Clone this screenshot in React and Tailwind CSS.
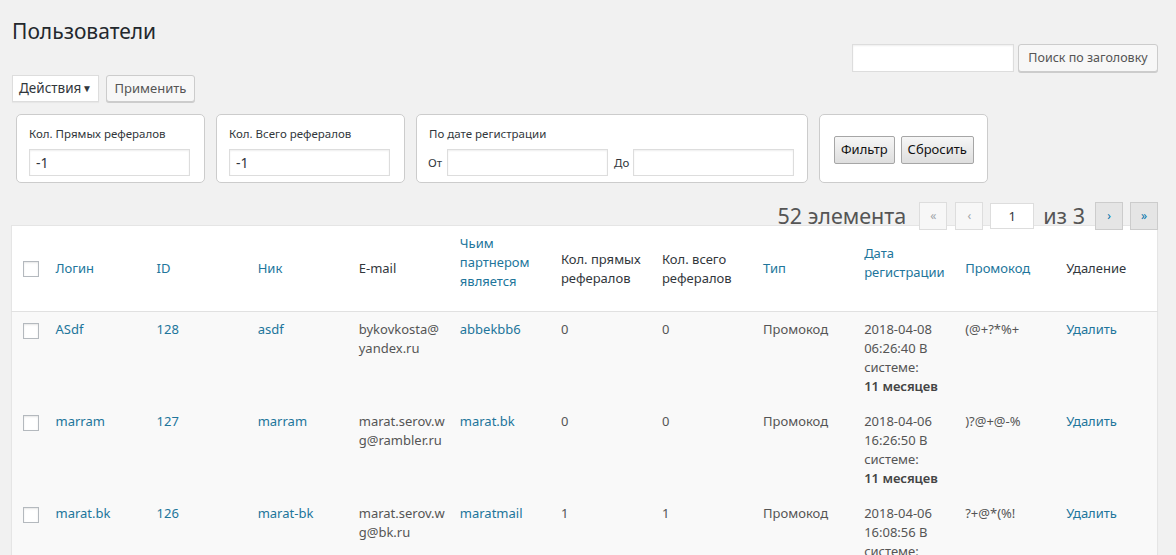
import React from 'react';

const rows = [
  {
    login: 'ASdf',
    id: '128',
    nick: 'asdf',
    email: ['bykovkosta@', 'yandex.ru'],
    partner: 'abbekbb6',
    direct: '0',
    total: '0',
    type: 'Промокод',
    date: ['2018-04-08', '06:26:40 В', 'системе:'],
    age: '11 месяцев',
    promo: '(@+?*%+',
  },
  {
    login: 'marram',
    id: '127',
    nick: 'marram',
    email: ['marat.serov.w', 'g@rambler.ru'],
    partner: 'marat.bk',
    direct: '0',
    total: '0',
    type: 'Промокод',
    date: ['2018-04-06', '16:26:50 В', 'системе:'],
    age: '11 месяцев',
    promo: ')?@+@-%',
  },
  {
    login: 'marat.bk',
    id: '126',
    nick: 'marat-bk',
    email: ['marat.serov.w', 'g@bk.ru'],
    partner: 'maratmail',
    direct: '1',
    total: '1',
    type: 'Промокод',
    date: ['2018-04-06', '16:08:56 В', 'системе:'],
    age: '11 месяцев',
    promo: '?+@*(%!',
  },
];

const Checkbox = () => (
  <span className="block w-[16px] h-[16px] border border-[#b4b9be] bg-white shadow-[inset_0_1px_2px_rgba(0,0,0,0.1)]" />
);

const FilterInput = ({ value }) => (
  <input
    readOnly
    value={value}
    className="w-[161px] h-[27px] border border-[#ddd] bg-white px-[6px] text-[14px] text-[#32373c] shadow-[inset_0_1px_2px_rgba(0,0,0,0.07)] outline-none"
  />
);

const OldButton = ({ children }) => (
  <button className="h-[28px] px-[6px] border border-[#a6a6a6] rounded-[2px] bg-gradient-to-b from-[#f6f6f6] to-[#dedede] text-[13px] text-[#111]">
    {children}
  </button>
);

const PageBtn = ({ children, active }) => (
  <span
    className={
      active
        ? 'flex items-center justify-center w-[28px] h-[28px] border border-[#ccc] bg-[#e5e5e5] text-[12px] text-[#0073aa]'
        : 'flex items-center justify-center w-[28px] h-[28px] border border-[#ddd] bg-[#f7f7f7] text-[12px] text-[#a0a5aa]'
    }
  >
    {children}
  </span>
);

export default function App() {
  const link = 'text-[#21759b]';
  return (
    <div className="min-h-screen bg-[#f1f1f1] pl-[11px] pr-[18px] font-['Noto_Sans','Open_Sans',sans-serif] text-[13px] text-[#555]">
      <h1 className="pt-[17px] pl-[1px] text-[21px] leading-[29px] text-[#23282d]">Пользователи</h1>

      {/* search */}
      <div className="flex justify-end -mt-[2px]">
        <input readOnly className="w-[162px] h-[28px] border border-[#ddd] bg-white shadow-[inset_0_1px_2px_rgba(0,0,0,0.07)] outline-none" />
        <button className="ml-[4px] h-[28px] w-[140px] border border-[#ccc] rounded-[3px] bg-[#f7f7f7] shadow-[0_1px_0_#ccc] text-[12.5px] text-[#555]">
          Поиск по заголовку
        </button>
      </div>

      {/* bulk actions */}
      <div className="mt-[3px] ml-[1px] flex gap-[7px]">
        <div className="flex items-center justify-between w-[87px] h-[27px] border border-[#ddd] bg-white pl-[6px] pr-[6px] text-[13.5px] text-[#32373c] shadow-[0_1px_1px_rgba(0,0,0,0.04)]">
          <span>Действия</span>
          <span className="text-[10px]">▼</span>
        </div>
        <button className="w-[89px] h-[27px] border border-[#ccc] rounded-[3px] bg-[#f7f7f7] shadow-[0_1px_0_#ccc] text-[13px] text-[#555]">
          Применить
        </button>
      </div>

      {/* filters */}
      <div className="mt-[12px] ml-[5px] flex gap-[11px] text-[11.5px] text-[#32373c]">
        <div className="w-[189px] h-[69px] border border-[#ccc] rounded-[5px] bg-white pl-[12px] pt-[11px]">
          <div className="leading-[16px]">Кол. Прямых рефералов</div>
          <div className="mt-[7px]"><FilterInput value="-1" /></div>
        </div>
        <div className="w-[189px] h-[69px] border border-[#ccc] rounded-[5px] bg-white pl-[12px] pt-[11px]">
          <div className="leading-[16px]">Кол. Всего рефералов</div>
          <div className="mt-[7px]"><FilterInput value="-1" /></div>
        </div>
        <div className="w-[392px] h-[69px] border border-[#ccc] rounded-[5px] bg-white pl-[11px] pt-[11px]">
          <div className="leading-[16px] pl-[1px]">По дате регистрации</div>
          <div className="mt-[7px] flex items-center">
            <span className="w-[19px]">От</span>
            <FilterInput value="" />
            <span className="ml-[6px] w-[19px]">До</span>
            <FilterInput value="" />
          </div>
        </div>
        <div className="w-[169px] h-[69px] border border-[#ccc] rounded-[5px] bg-white pl-[14px] pt-[21px] flex gap-[6px] items-start">
          <OldButton>Фильтр</OldButton>
          <OldButton>Сбросить</OldButton>
        </div>
      </div>

      {/* pagination */}
      <div className="relative z-10 mt-[19px] flex justify-end items-center h-[28px] text-[#555]">
        <span className="text-[21.5px] mr-[13px]">52 элемента</span>
        <PageBtn>«</PageBtn>
        <span className="ml-[8px]"><PageBtn>‹</PageBtn></span>
        <input readOnly value="1" className="ml-[7px] w-[44px] h-[26px] border border-[#ddd] bg-white text-center text-[13px] text-[#32373c] outline-none" />
        <span className="ml-[9px] mr-[10px] text-[21.5px]">из 3</span>
        <PageBtn active>›</PageBtn>
        <span className="ml-[7px]"><PageBtn active>»</PageBtn></span>
      </div>

      {/* table */}
      <table className="-mt-[5px] w-[1147px] table-fixed border border-[#e5e5e5] shadow-[0_1px_1px_rgba(0,0,0,0.04)] border-collapse">
        <colgroup>
          <col className="w-[34px]" />
        </colgroup>
        <thead className="bg-white text-[13px] leading-[19px]">
          <tr className="border-b border-[#e1e1e1] h-[85px]">
            <th className="align-middle pl-[11px]"><Checkbox /></th>
            <th className={`text-left font-normal align-middle px-[10px] ${link}`}>Логин</th>
            <th className={`text-left font-normal align-middle px-[10px] ${link}`}>ID</th>
            <th className={`text-left font-normal align-middle px-[10px] ${link}`}>Ник</th>
            <th className="text-left font-normal align-middle px-[10px] text-[#32373c]">E-mail</th>
            <th className={`text-left font-normal align-middle px-[10px] pt-[8px] pb-[20px] ${link}`}>Чьим партнером является</th>
            <th className="text-left font-normal align-middle px-[10px] text-[#32373c]">Кол. прямых рефералов</th>
            <th className="text-left font-normal align-middle px-[10px] text-[#32373c]">Кол. всего рефералов</th>
            <th className={`text-left font-normal align-middle px-[10px] ${link}`}>Тип</th>
            <th className={`text-left font-normal align-middle px-[10px] pt-[8px] pb-[20px] ${link}`}>Дата регистрации</th>
            <th className={`text-left font-normal align-middle px-[10px] ${link}`}>Промокод</th>
            <th className="text-left font-normal align-middle px-[10px] text-[#32373c]">Удаление</th>
          </tr>
        </thead>
        <tbody className="bg-[#f9f9f9] text-[13px] leading-[19px]">
          {rows.map((r) => (
            <tr key={r.id} className="h-[92px]">
              <td className="align-top pl-[11px] pt-[11px]"><Checkbox /></td>
              <td className={`align-top px-[10px] pt-[8px] ${link}`}>{r.login}</td>
              <td className={`align-top px-[10px] pt-[8px] ${link}`}>{r.id}</td>
              <td className={`align-top px-[10px] pt-[8px] ${link}`}>{r.nick}</td>
              <td className="align-top px-[10px] pt-[8px]">
                {r.email.map((l) => (
                  <span key={l} className="block">{l}</span>
                ))}
              </td>
              <td className={`align-top px-[10px] pt-[8px] ${link}`}>{r.partner}</td>
              <td className="align-top px-[10px] pt-[8px]">{r.direct}</td>
              <td className="align-top px-[10px] pt-[8px]">{r.total}</td>
              <td className="align-top px-[10px] pt-[8px]">{r.type}</td>
              <td className="align-top px-[10px] pt-[8px]">
                {r.date.map((l) => (
                  <span key={l} className="block">{l}</span>
                ))}
                <span className="block font-semibold text-[#444]">{r.age}</span>
              </td>
              <td className="align-top px-[10px] pt-[8px]">{r.promo}</td>
              <td className={`align-top px-[10px] pt-[8px] ${link}`}>Удалить</td>
            </tr>
          ))}
        </tbody>
      </table>
    </div>
  );
}
